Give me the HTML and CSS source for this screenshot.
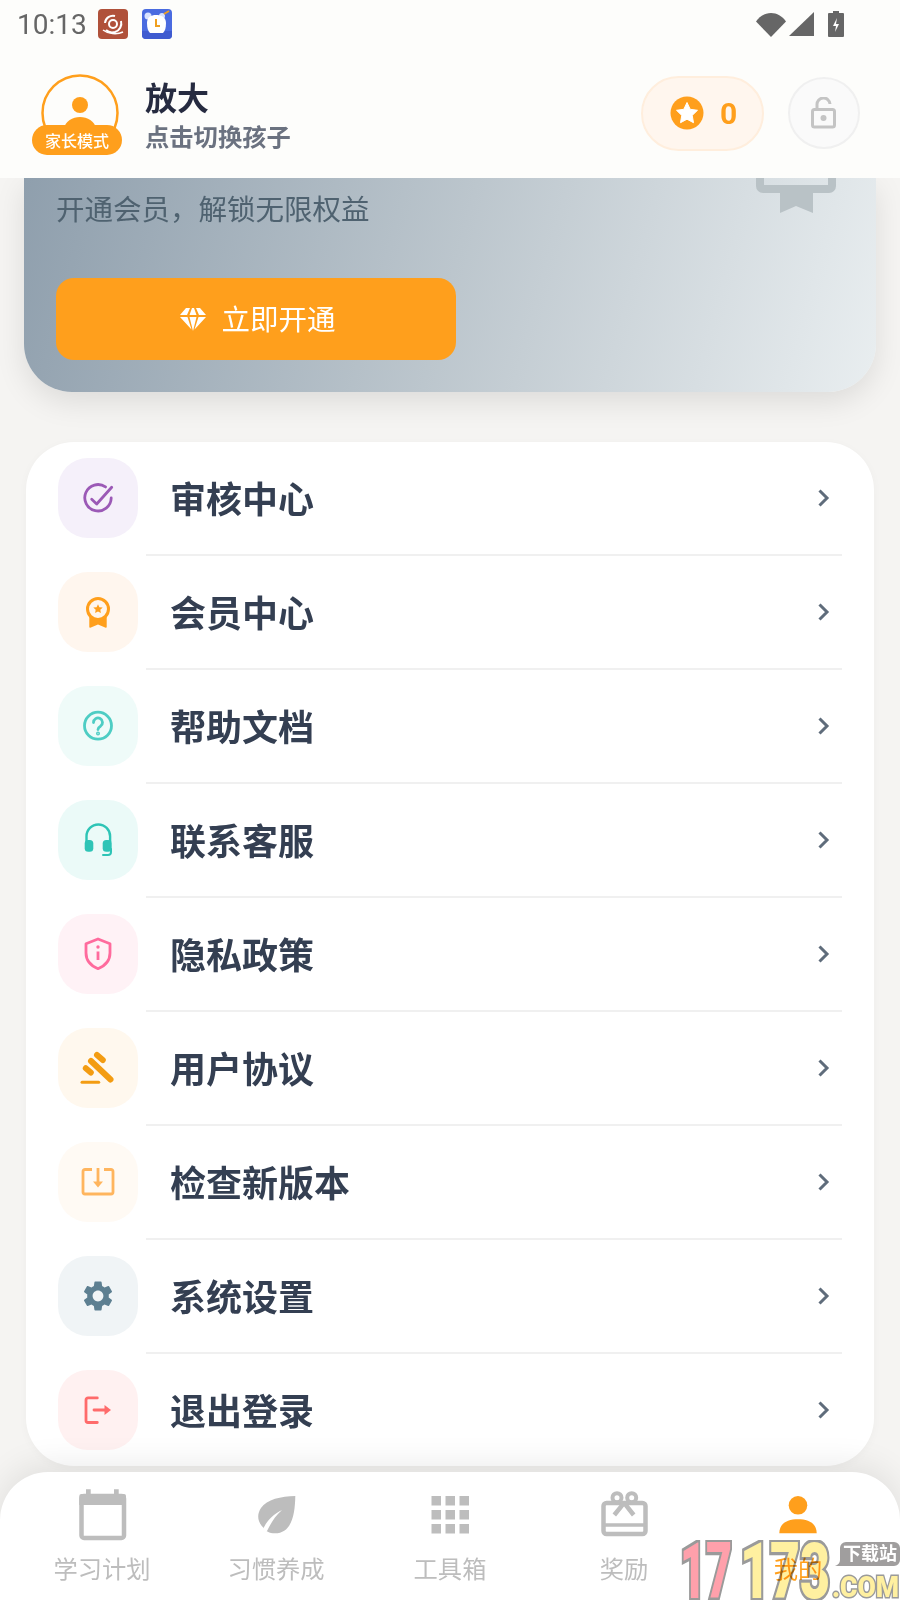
FILE: index.html
```html
<!DOCTYPE html>
<html lang="zh-CN">
<head>
    <meta charset="UTF-8">
    <meta name="viewport" content="width=device-width, initial-scale=1.0">
    <title>我的</title>
    <link rel="stylesheet" href="styles.css">
</head>
<body>

<div class="page">
    <!-- Status bar and user -->
    <header class="top">
        <div class="status-bar">
            <span class="time">10:13</span>
            <svg class="notify" viewBox="0 0 30 30">
                <rect width="30" height="30" rx="4" fill="#b0513a"/>
                <g fill="none" stroke="#fff" stroke-width="2">
                    <circle cx="15" cy="15" r="4"/>
                    <path d="M7 14a8 8 0 0 1 10-7M23 12a9 9 0 0 1-6 11c-4 1-7 0-9-2"/>
                    <path d="M5 21c5 4 14 5 20 2" stroke-width="1.4"/>
                </g>
            </svg>
            <svg class="notify" viewBox="0 0 30 30">
                <rect width="30" height="30" rx="4" fill="#4a6be0"/>
                <path d="M0 22h30v4a4 4 0 0 1-4 4H4a4 4 0 0 1-4-4z" fill="#3f5bd0"/>
                <circle cx="6" cy="7" r="3.5" fill="#d8e2ff"/>
                <circle cx="20" cy="7" r="3" fill="#d8e2ff"/>
                <path d="M5 14c0-6 4-8 9-8s10 2 10 8c0 5-1 8-3 10H8c-2-2-3-5-3-10z" fill="#fff"/>
                <path d="M14 10v7h4" fill="none" stroke="#f0a020" stroke-width="2"/>
                <path d="M22 5l5-3" stroke="#f0a020" stroke-width="2"/>
            </svg>
            <div class="status-right">
                <svg class="wifi" viewBox="0 0 30 25"><path d="M15 25L0 9.500C4 4 9 1 15 1s11 3 15 8.500z" fill="#666"/></svg>
                <svg class="signal" viewBox="0 0 25 24"><path d="M25 0v24H0z" fill="#666"/></svg>
                <svg class="battery" viewBox="0 0 16 26">
                    <path d="M5 0h6v2h4a1 1 0 0 1 1 1v22a1 1 0 0 1-1 1H1a1 1 0 0 1-1-1V3a1 1 0 0 1 1-1h4z" fill="#666"/>
                    <path d="M9 7l-4 8h3l-1 6 4-8H8z" fill="#fff"/>
                </svg>
            </div>
        </div>

        <div class="user-row">
            <div class="avatar">
                <svg class="avatar-ring" viewBox="0 0 78 78">
                    <circle cx="39" cy="39" r="37.500" fill="none" stroke="#ff9f1c" stroke-width="2.500"/>
                    <circle cx="39" cy="31" r="8" fill="#ff9f1c"/>
                    <path d="M22.500 55c2-8 9-12 16.500-12s14.500 4 16.500 12z" fill="#ff9f1c"/>
                </svg>
                <span class="avatar-badge">家长模式</span>
            </div>
            <div class="user-text">
                <div class="user-name">放大</div>
                <div class="user-hint">点击切换孩子</div>
            </div>
            <div class="points">
                <svg class="points-star" viewBox="0 0 34 34">
                    <circle cx="17" cy="17" r="16.500" fill="#ff9f1c"/>
                    <path d="M17 6.500l3.200 6.800 7.300 1-5.300 5.100 1.300 7.300-6.500-3.500-6.500 3.500 1.300-7.300-5.300-5.100 7.300-1z" fill="#fff" stroke="#fff" stroke-linejoin="round"/>
                </svg>
                <span class="points-num">0</span>
            </div>
            <div class="lock">
                <svg width="26" height="32" viewBox="0 0 26 32">
                    <path d="M6 12V8a6.500 6.500 0 0 1 13-1" fill="none" stroke="#c4c4c4" stroke-width="3"/>
                    <rect x="1.500" y="12.500" width="22" height="17.500" rx="2" fill="none" stroke="#c4c4c4" stroke-width="3"/>
                    <circle cx="12.500" cy="21" r="3" fill="#c4c4c4"/>
                </svg>
            </div>
        </div>
    </header>

    <!-- VIP card, scrolled partly under the header -->
    <section class="vip-card">
        <svg class="vip-award" viewBox="0 0 80 35">
            <path d="M0 0h8v7h64V0h8v8a7 7 0 0 1-7 7H57v20l-17-7-16 7V15H7a7 7 0 0 1-7-7z" fill="#b9c2c6"/>
        </svg>
        <p class="vip-text">开通会员，解锁无限权益</p>
        <button class="vip-btn" type="button">
            <svg width="26" height="23" viewBox="0 0 26 23">
                <path d="M6 0h4L7 7H0zM12 0h2l2.500 7h-7zM16 0h4l6 7h-7zM0 9h7.500l4 12.500zM9.500 9h7L13 23zM18.500 9H26L14.500 21.500z" fill="#fff"/>
            </svg>
            <span class="vip-btn-text">立即开通</span>
        </button>
    </section>

    <!-- Menu -->
    <section class="menu">
        <div class="menu-row">
            <div class="menu-icon bg-purple">
                <svg viewBox="0 0 36 36" fill="none" stroke="#9b59b6" stroke-width="2.800" stroke-linecap="round" stroke-linejoin="round">
                    <path d="M25.500 6.900A13.200 13.200 0 1 0 31.200 18"/>
                    <path d="M11.700 19.300l5 4.700 15-16.700"/>
                </svg>
            </div>
            <div class="menu-body"><span>审核中心</span><svg class="chevron" viewBox="0 0 14 20"><path d="M2.500 2.500L10 10l-7.500 7.500"/></svg></div>
        </div>
        <div class="menu-row">
            <div class="menu-icon bg-orange">
                <svg viewBox="0 0 36 36">
                    <path d="M9.300 20h17.400v13c0 .6-.5 .9-1 .7L18 30.500l-7.700 3.200c-.5 .2-1-.1-1-.7z" fill="#ff9f1c"/>
                    <circle cx="18" cy="15" r="10.500" fill="#fff6ee" stroke="#ff9f1c" stroke-width="3"/>
                    <path d="M18 10.200l1.400 3 3.300 .4-2.400 2.200 .6 3.200-2.900-1.600-2.900 1.600 .6-3.200-2.400-2.200 3.300-.4z" fill="#ff9f1c"/>
                </svg>
            </div>
            <div class="menu-body"><span>会员中心</span><svg class="chevron" viewBox="0 0 14 20"><path d="M2.500 2.500L10 10l-7.500 7.500"/></svg></div>
        </div>
        <div class="menu-row">
            <div class="menu-icon bg-mint">
                <svg viewBox="0 0 36 36" fill="none" stroke="#4ecdc4" stroke-width="2.800" stroke-linecap="round">
                    <circle cx="18" cy="17.700" r="13.500"/>
                    <path d="M13.500 14.500a4.500 4.500 0 1 1 7 3.700c-1.600 1-2.500 1.800-2.500 3.300"/>
                    <circle cx="18" cy="25.500" r=".6" fill="#4ecdc4"/>
                </svg>
            </div>
            <div class="menu-body"><span>帮助文档</span><svg class="chevron" viewBox="0 0 14 20"><path d="M2.500 2.500L10 10l-7.500 7.500"/></svg></div>
        </div>
        <div class="menu-row">
            <div class="menu-icon bg-teal">
                <svg viewBox="0 0 36 36">
                    <path d="M6.500 20v-5.700a11.800 11.800 0 0 1 23.600 0V20" fill="none" stroke="#2ec4b6" stroke-width="2.400"/>
                    <rect x="4.700" y="18" width="8.600" height="11.700" rx="3.500" fill="#2ec4b6"/>
                    <rect x="22.700" y="18" width="9" height="11.700" rx="3.500" fill="#2ec4b6"/>
                    <path d="M31 27v3a3 3 0 0 1-3 3h-5" fill="none" stroke="#2ec4b6" stroke-width="2" stroke-linecap="round"/>
                </svg>
            </div>
            <div class="menu-body"><span>联系客服</span><svg class="chevron" viewBox="0 0 14 20"><path d="M2.500 2.500L10 10l-7.500 7.500"/></svg></div>
        </div>
        <div class="menu-row">
            <div class="menu-icon bg-pink">
                <svg viewBox="0 0 36 36" fill="none" stroke="#ff6b9d" stroke-width="2.800" stroke-linejoin="round">
                    <path d="M18 3l12 4.700V17c0 7.800-5.500 13-12 15.700C11.500 30 6 24.800 6 17V7.700z"/>
                    <path d="M18 15.500v8.500"/>
                    <circle cx="18" cy="11" r="1.700" fill="#ff6b9d" stroke="none"/>
                </svg>
            </div>
            <div class="menu-body"><span>隐私政策</span><svg class="chevron" viewBox="0 0 14 20"><path d="M2.500 2.500L10 10l-7.500 7.500"/></svg></div>
        </div>
        <div class="menu-row">
            <div class="menu-icon bg-amber">
                <svg viewBox="0 0 36 36" fill="none" stroke="#f39c12" stroke-linecap="round">
                    <path d="M17 5l5.800 5" stroke-width="6"/>
                    <path d="M11 11l19.500 18.500" stroke-width="6"/>
                    <path d="M5.800 18.300l5 4.200" stroke-width="6"/>
                    <path d="M2 32.300h16.700" stroke-width="3"/>
                </svg>
            </div>
            <div class="menu-body"><span>用户协议</span><svg class="chevron" viewBox="0 0 14 20"><path d="M2.500 2.500L10 10l-7.500 7.500"/></svg></div>
        </div>
        <div class="menu-row">
            <div class="menu-icon bg-cream">
                <svg viewBox="0 0 36 36">
                    <path d="M12 5.500H5a2 2 0 0 0-2 2V28a2 2 0 0 0 2 2h26a2 2 0 0 0 2-2V7.500a2 2 0 0 0-2-2h-7M18 4v14" fill="none" stroke="#ffb55e" stroke-width="2.800"/>
                    <path d="M13 17.500h10l-5 6z" fill="#ffb55e"/>
                </svg>
            </div>
            <div class="menu-body"><span>检查新版本</span><svg class="chevron" viewBox="0 0 14 20"><path d="M2.500 2.500L10 10l-7.500 7.500"/></svg></div>
        </div>
        <div class="menu-row">
            <div class="menu-icon bg-slate">
                <svg viewBox="0 0 24 24"><path fill="#5d7f91" fill-rule="evenodd" d="M19.140 12.940c.04-.3.06-.61.06-.94 0-.32-.02-.64-.07-.94l2.030-1.580a.49.49 0 0 0 .12-.61l-1.920-3.320a.488.488 0 0 0-.59-.22l-2.390.96c-.5-.38-1.030-.7-1.620-.94l-.36-2.540a.484.484 0 0 0-.48-.41h-3.840c-.24 0-.43.17-.47.41l-.36 2.540c-.59.24-1.130.57-1.620.94l-2.390-.96c-.22-.08-.47 0-.59.22L2.740 8.870c-.12.21-.08.47.12.61l2.030 1.580c-.05.3-.09.63-.09.94s.02.64.07.94l-2.030 1.580a.49.49 0 0 0-.12.61l1.920 3.320c.12.22.37.29.59.22l2.390-.96c.5.38 1.030.7 1.620.94l.36 2.540c.05.24.24.41.48.41h3.840c.24 0 .44-.17.47-.41l.36-2.540c.59-.24 1.130-.56 1.620-.94l2.390.96c.22.08.47 0 .59-.22l1.920-3.320c.12-.22.07-.47-.12-.61l-2.010-1.580zM12 15.600c-1.980 0-3.600-1.620-3.600-3.600s1.620-3.600 3.600-3.600 3.600 1.620 3.600 3.600-1.620 3.600-3.600 3.600z"/></svg>
            </div>
            <div class="menu-body"><span>系统设置</span><svg class="chevron" viewBox="0 0 14 20"><path d="M2.500 2.500L10 10l-7.500 7.500"/></svg></div>
        </div>
        <div class="menu-row">
            <div class="menu-icon bg-red">
                <svg viewBox="0 0 36 36">
                    <path d="M17.300 5.900H8a2 2 0 0 0-2 2v20.600a2 2 0 0 0 2 2h9.300M14 18h12" fill="none" stroke="#ff6b6b" stroke-width="2.800" stroke-linecap="round"/>
                    <path d="M24.500 13l6.500 5-6.500 5z" fill="#ff6b6b"/>
                </svg>
            </div>
            <div class="menu-body"><span>退出登录</span><svg class="chevron" viewBox="0 0 14 20"><path d="M2.500 2.500L10 10l-7.500 7.500"/></svg></div>
        </div>
    </section>

    <!-- Bottom tabs -->
    <nav class="tabs">
        <div class="tab">
            <svg viewBox="0 0 56 56">
                <rect x="7.500" y="10" width="42.500" height="42" rx="2.500" fill="none" stroke="#bdbdbd" stroke-width="4.500"/>
                <path d="M8 8h42a2 2 0 0 1 2 2v9H5.300v-9a2 2 0 0 1 2-2zM12 3.300h4.700V9H12zM40 3.300h4.700V9H40z" fill="#bdbdbd"/>
            </svg>
            <span>学习计划</span>
        </div>
        <div class="tab">
            <svg viewBox="0 0 56 56">
                <path d="M47.300 10C47 28 44 47.300 27 47.300c-6 0-9-2-12-6C9 35 9 28 13 22c6-9 20-11.500 34.300-12z" fill="#bdbdbd"/>
                <path d="M14 45c4-9 10-16 20-21-7 6-11 13-15 21z" fill="#fff"/>
            </svg>
            <span>习惯养成</span>
        </div>
        <div class="tab">
            <svg viewBox="0 0 56 56" fill="#bdbdbd">
                <rect x="9.500" y="10" width="9.500" height="9.500"/><rect x="23.500" y="10" width="9.500" height="9.500"/><rect x="37.500" y="10" width="9.500" height="9.500"/>
                <rect x="9.500" y="24" width="9.500" height="9.500"/><rect x="23.500" y="24" width="9.500" height="9.500"/><rect x="37.500" y="24" width="9.500" height="9.500"/>
                <rect x="9.500" y="38" width="9.500" height="9.500"/><rect x="23.500" y="38" width="9.500" height="9.500"/><rect x="37.500" y="38" width="9.500" height="9.500"/>
            </svg>
            <span>工具箱</span>
        </div>
        <div class="tab">
            <svg viewBox="0 0 56 56" fill="none" stroke="#bdbdbd" stroke-width="4.500">
                <rect x="7.500" y="17" width="42" height="31" rx="3"/>
                <path d="M7 39h44" stroke-width="3.500"/>
                <circle cx="21" cy="11.700" r="4.500" stroke-width="4"/>
                <circle cx="35.700" cy="11.700" r="4.500" stroke-width="4"/>
                <path d="M27.700 17.300l-9.400 11.700M28.500 17.300l9.200 11.700"/>
            </svg>
            <span>奖励</span>
        </div>
        <div class="tab tab-active">
            <svg viewBox="0 0 56 56">
                <circle cx="28" cy="19.300" r="9.300" fill="#ff9f1c"/>
                <path d="M9.300 47.300C9.300 37 18 33.300 28 33.300s18.700 3.700 18.700 14z" fill="#ff9f1c"/>
            </svg>
            <span>我的</span>
        </div>
    </nav>

    <!-- Site watermark lying over the tab bar -->
    <svg class="watermark" viewBox="0 0 223 60">
        <text class="wm-digits wm-pink" transform="translate(3 58) scale(1 1.6)" textLength="52" lengthAdjust="spacingAndGlyphs">17</text>
        <text class="wm-digits wm-yellow" transform="translate(63 58) scale(1 1.6)" textLength="90" lengthAdjust="spacingAndGlyphs">173</text>
        <path d="M169 2h48a6 6 0 0 1 6 6v12a6 6 0 0 1-6 6h-59c3-1 5-3 5-6V8a6 6 0 0 1 6-6z" fill="#a09e9e"/>
        <text class="wm-site" x="193" y="20">下载站</text>
        <text class="wm-com" x="155" y="57" textLength="67" lengthAdjust="spacingAndGlyphs">.COM</text>
    </svg>
</div>

</body>
</html>
```

FILE: styles.css
```css
body {
    margin: 0;
    background-color: #f5f4f2;
    font-family: "Noto Sans CJK SC", sans-serif;
}
.page {
    position: relative;
    width: 900px;
    height: 1600px;
    overflow: hidden;
    display: flex;
    flex-direction: column;
}

/* Header */
.top {
    position: relative;
    z-index: 2;
    height: 178px;
    background-color: #fdfdfb;
}
.status-bar {
    display: flex;
    align-items: center;
    height: 48px;
    padding: 0 56px 0 17px;
}
.time {
    font-family: Roboto, sans-serif;
    font-size: 28px;
    color: #666;
    width: 81px;
}
.notify {
    width: 30px;
    height: 30px;
    margin-right: 14px;
}
.status-right {
    margin-left: auto;
    display: flex;
    align-items: center;
}
.wifi {
    width: 30px;
    height: 25px;
}
.signal {
    width: 25px;
    height: 24px;
    margin-left: 3px;
}
.battery {
    width: 16px;
    height: 26px;
    margin-left: 14px;
}
.user-row {
    display: flex;
    align-items: center;
    height: 130px;
    padding: 0 40px 0 32px;
}
.avatar {
    position: relative;
    width: 90px;
    height: 81px;
    margin-top: 2px;
}
.avatar-ring {
    display: block;
    width: 78px;
    height: 78px;
    margin-left: 9px;
}
.avatar-badge {
    position: absolute;
    left: 0;
    bottom: 0;
    width: 90px;
    height: 30px;
    border-radius: 15px;
    background-color: #ff9f1c;
    color: white;
    font-size: 16px;
    font-weight: 500;
    line-height: 30px;
    text-align: center;
}
.user-text {
    margin-left: 23px;
}
.user-name {
    font-size: 32px;
    font-weight: 700;
    line-height: 46px;
    color: #262b40;
}
.user-hint {
    font-size: 24.3px;
    font-weight: 700;
    line-height: 34px;
    color: #6b7280;
}
.points {
    margin-left: auto;
    box-sizing: border-box;
    width: 123px;
    height: 75px;
    display: flex;
    align-items: center;
    padding-left: 27px;
    border: 2px solid #ffeedd;
    border-radius: 38px;
    background-color: #fff6ee;
}
.points-star {
    width: 34px;
    height: 34px;
}
.points-num {
    margin-left: 16px;
    font-family: Roboto, sans-serif;
    font-size: 30px;
    font-weight: 700;
    color: #ff9f1c;
}
.lock {
    box-sizing: border-box;
    width: 72px;
    height: 72px;
    margin-left: 24px;
    display: flex;
    align-items: center;
    justify-content: center;
    border: 2px solid #f0f0f0;
    border-radius: 50%;
    background-color: #fafafa;
}

/* VIP card */
.vip-card {
    position: relative;
    margin: 0 24px;
    padding: 10px 32px 32px;
    border-radius: 0 0 48px 48px;
    background: linear-gradient(105deg, #8f9fad 0%, #bcc6cd 50%, #e9eef0 100%);
    box-shadow: 0 10px 30px rgba(0, 0, 0, 0.1);
}
.vip-award {
    position: absolute;
    top: 0;
    right: 40px;
    width: 80px;
    height: 35px;
}
.vip-text {
    margin: 0;
    font-size: 28.5px;
    line-height: 40px;
    color: #4f6270;
}
.vip-btn {
    display: flex;
    align-items: center;
    justify-content: center;
    gap: 14px;
    width: 400px;
    height: 82px;
    margin-top: 50px;
    padding: 0 0 0 4px;
    border: none;
    border-radius: 18px;
    background-color: #ff9f1c;
    color: white;
    font-family: inherit;
    font-size: 28.5px;
}
.vip-btn-text {
    margin: 0 0 3px 1px;
}

/* Menu */
.menu {
    margin: 50px 26px 0;
    padding: 0 32px;
    border-radius: 48px;
    background-color: white;
    box-shadow: 0 2px 10px rgba(0, 0, 0, 0.03);
}
.menu-row {
    display: flex;
}
.menu-icon {
    flex: none;
    display: flex;
    align-items: center;
    justify-content: center;
    width: 80px;
    height: 80px;
    margin: 16px 8px 18px 0;
    border-radius: 30px;
}
.menu-row:last-child .menu-icon {
    margin-bottom: 16px;
}
.menu-icon svg {
    width: 36px;
    height: 36px;
    overflow: visible;
}
.bg-purple { background-color: #f5f0fa; }
.bg-orange { background-color: #fff6ee; }
.bg-mint { background-color: #effbf9; }
.bg-teal { background-color: #ebfaf8; }
.bg-pink { background-color: #fff2f6; }
.bg-amber { background-color: #fff8ee; }
.bg-cream { background-color: #fffaf4; }
.bg-slate { background-color: #f0f4f6; }
.bg-red { background-color: #fff1f1; }
.menu-body {
    flex: 1;
    display: flex;
    align-items: center;
    justify-content: space-between;
    padding: 0 11px 0 24px;
    border-bottom: 2px solid #f0f0f0;
    font-size: 36px;
    font-weight: 700;
    color: #343f52;
}
.menu-body span {
    margin-bottom: 2px;
}
.menu-row:last-child .menu-body {
    border-bottom: none;
}
.chevron {
    width: 14px;
    height: 20px;
    fill: none;
    stroke: #5f6c7b;
    stroke-width: 3;
}

/* Tabs */
.tabs {
    position: relative;
    z-index: 1;
    display: flex;
    height: 128px;
    margin-top: 6px;
    padding: 0 15px;
    border-radius: 48px 48px 0 0;
    background-color: white;
    box-shadow: 0 -6px 34px rgba(0, 0, 0, 0.09);
}
.tab {
    flex: 1;
    display: flex;
    flex-direction: column;
    align-items: center;
    padding-top: 14px;
    font-size: 24.3px;
    line-height: 32px;
    color: #bdbdbd;
}
.tab svg {
    width: 56px;
    height: 56px;
    margin-bottom: 10px;
}
.tab-active {
    color: #ff9f1c;
}

/* Watermark */
.watermark {
    position: absolute;
    z-index: 3;
    right: 0;
    bottom: 0;
    width: 223px;
    height: 60px;
    mix-blend-mode: multiply;
}
.wm-digits {
    font-family: Roboto, sans-serif;
    font-size: 49px;
    font-weight: 900;
    stroke: #9a9a9a;
    stroke-width: 4px;
    paint-order: stroke;
}
.wm-pink { fill: #ffa0ab; }
.wm-yellow { fill: #fff0a0; }
.wm-site {
    font-size: 18px;
    font-weight: 700;
    fill: white;
    text-anchor: middle;
}
.wm-com {
    font-family: Roboto, sans-serif;
    font-size: 30px;
    font-weight: 900;
    fill: #fff0a0;
    stroke: #9a9a9a;
    stroke-width: 3px;
    paint-order: stroke;
}
```
